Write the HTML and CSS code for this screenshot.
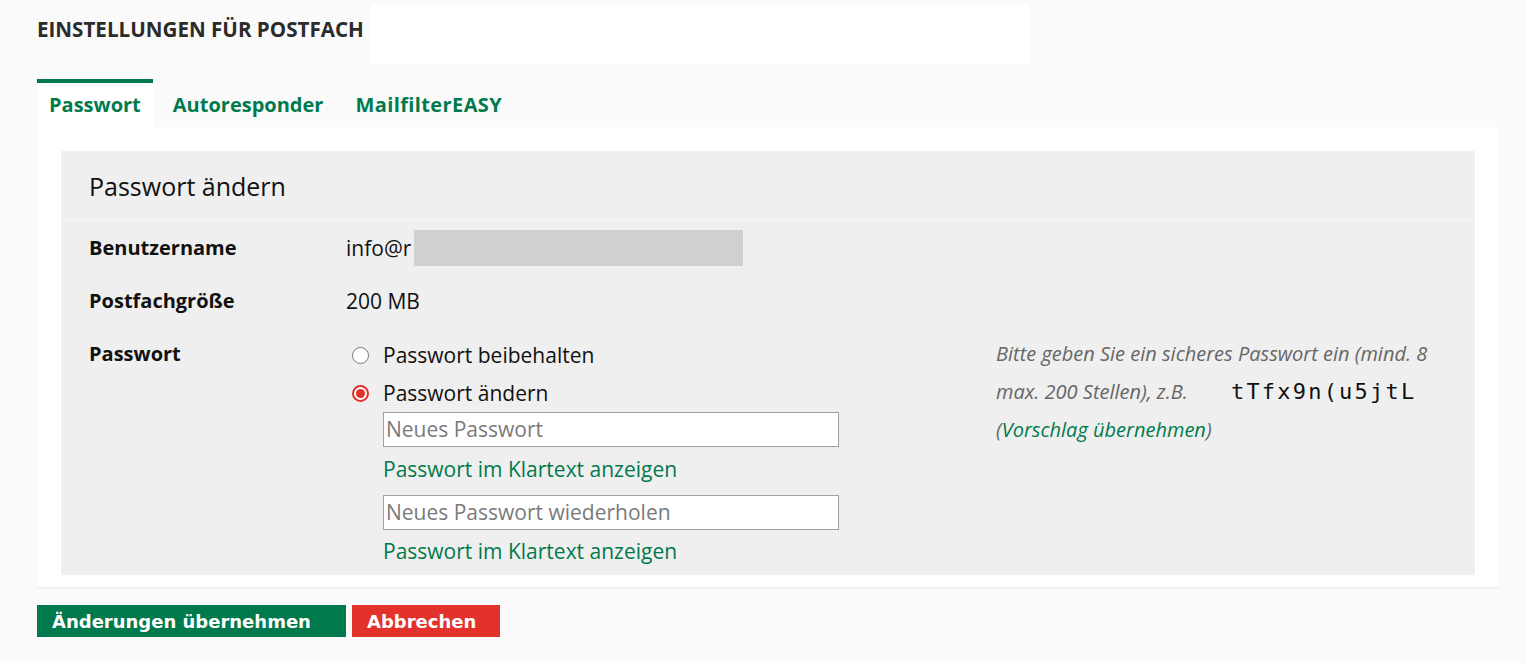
FILE: index.html
```html
<!DOCTYPE html>
<html lang="de">
<head>
<meta charset="utf-8">
<title>Einstellungen für Postfach</title>
<link rel="stylesheet" href="styles.css">
</head>
<body>
<div class="top">
  <h1 class="title">EINSTELLUNGEN FÜR POSTFACH</h1>
  <div class="blank"></div>
</div>
<nav class="tabs">
  <a class="tab active">Passwort</a>
  <a class="tab">Autoresponder</a>
  <a class="tab">MailfilterEASY</a>
</nav>
<div class="card">
  <div class="panel">
    <div class="panel-head">Passwort ändern</div>
    <div class="panel-body">
      <div class="row">
        <div class="label">Benutzername</div>
        <div class="value">info@r<span class="redact"></span></div>
      </div>
      <div class="row">
        <div class="label">Postfachgröße</div>
        <div class="value">200 MB</div>
      </div>
      <div class="row pw-row">
        <div class="label">Passwort</div>
        <div class="value pw-col">
          <label class="radio"><span class="dot"></span>Passwort beibehalten</label>
          <label class="radio"><span class="dot checked"></span>Passwort ändern</label>
          <div class="field">Neues Passwort</div>
          <a class="link">Passwort im Klartext anzeigen</a>
          <div class="field">Neues Passwort wiederholen</div>
          <a class="link last">Passwort im Klartext anzeigen</a>
        </div>
        <div class="hint">
          Bitte geben Sie ein sicheres Passwort ein (mind. 8<br>
          max. 200 Stellen), z.B. <span class="sample">tTfx9n(u5jtL</span><br>
          (<a class="hint-link">Vorschlag übernehmen</a>)
        </div>
      </div>
    </div>
  </div>
</div>
<div class="actions">
  <button class="btn btn-ok">Änderungen übernehmen</button>
  <button class="btn btn-cancel">Abbrechen</button>
</div>
</body>
</html>
```
FILE: styles.css
```css
* { box-sizing: border-box; }
body {
  margin: 0;
  background: #fafafa;
  font-family: "Open Sans", Lato, sans-serif;
  color: #111;
  font-size: 21px;
}
.top {
  display: flex;
  align-items: flex-start;
  padding: 4px 0 0 37px;
}
.title {
  margin: 12px 0 0 0;
  font-size: 20.6px;
  line-height: 26px;
  font-weight: 700;
  color: #2b2b2b;
}
.blank {
  width: 658px;
  height: 60px;
  margin-left: 7px;
  background: #fff;
}
.tabs {
  display: flex;
  margin: 15px 0 0 37px;
}
.tab {
  display: block;
  height: 48px;
  line-height: 44px;
  padding: 0 12px;
  margin-right: 8px;
  border-top: 4px solid transparent;
  color: #007a4c;
  font-weight: 700;
  font-size: 20px;
}
.tab:last-child { letter-spacing: 0.4px; }
.tab.active {
  border-top-color: #007a4c;
  background: #fff;
}
.card {
  margin: 0 26px 0 37px;
  background: #fff;
  padding: 24px 24px 12px;
  box-shadow: 0 1px 2px rgba(0,0,0,0.08);
}
.panel {
  background: #efefef;
}
.panel-head {
  height: 70px;
  line-height: 70px;
  padding-left: 28px;
  font-size: 25px;
  border-bottom: 1px solid #f7f7f7;
  color: #111;
}
.panel-body {
  padding: 7px 0 9px 28px;
}
.row {
  display: flex;
  min-height: 53px;
  align-items: flex-start;
}
.label {
  width: 257px;
  font-weight: 700;
  font-size: 20px;
  line-height: 40px;
  flex: none;
}
.value {
  line-height: 40px;
  display: flex;
  align-items: center;
}
.redact {
  display: inline-block;
  width: 329px;
  height: 36px;
  margin-left: 3px;
  background: #d0d0d2;
}
.pw-row { padding-top: 2px; }
.pw-col {
  flex-direction: column;
  align-items: flex-start;
  width: 650px;
  flex: none;
}
.pw-row .label { line-height: 20px; padding-top: 8px; }
.radio {
  display: flex;
  align-items: center;
  height: 38px;
  margin-left: 6px;
}
.dot {
  width: 17px;
  height: 17px;
  border-radius: 50%;
  border: 1.5px solid #777;
  background: #fff;
  margin-right: 14px;
  position: relative;
}
.dot.checked {
  border: 2px solid #e3312b;
}
.dot.checked::after {
  content: "";
  position: absolute;
  left: 2px; top: 2px;
  width: 9px; height: 9px;
  border-radius: 50%;
  background: #e3312b;
}
.field {
  width: 456px;
  height: 35px;
  margin: 0 0 0 37px;
  background: #fff;
  border: 1px solid #a0a0a0;
  line-height: 33px;
  padding-left: 2px;
  color: #7a7a7a;
}
.link {
  display: block;
  margin: 7px 0 11px 37px;
  line-height: 30px;
  color: #007a4c;
}
.link.last { margin-top: 6px; margin-bottom: 0; }
.hint {
  font-style: italic;
  color: #666;
  font-size: 20px;
  line-height: 38px;
  margin-top: -1px;
}
.sample {
  font-style: normal;
  font-family: "DejaVu Sans Mono", monospace;
  font-size: 22px;
  letter-spacing: 2.2px;
  color: #111;
  margin-left: 38px;
}
.hint-link { color: #007a4c; }
.actions {
  display: flex;
  gap: 6px;
  margin: 18px 0 0 37px;
}
.btn {
  border: 0;
  height: 32px;
  padding: 0 15px;
  font-family: "DejaVu Sans", Verdana, sans-serif;
  font-weight: 700;
  font-size: 18px;
  color: #fff;
  text-align: left;
}
.btn-ok { background: #007a4c; width: 309px; }
.btn-cancel { background: #e3312b; width: 148px; }
```
